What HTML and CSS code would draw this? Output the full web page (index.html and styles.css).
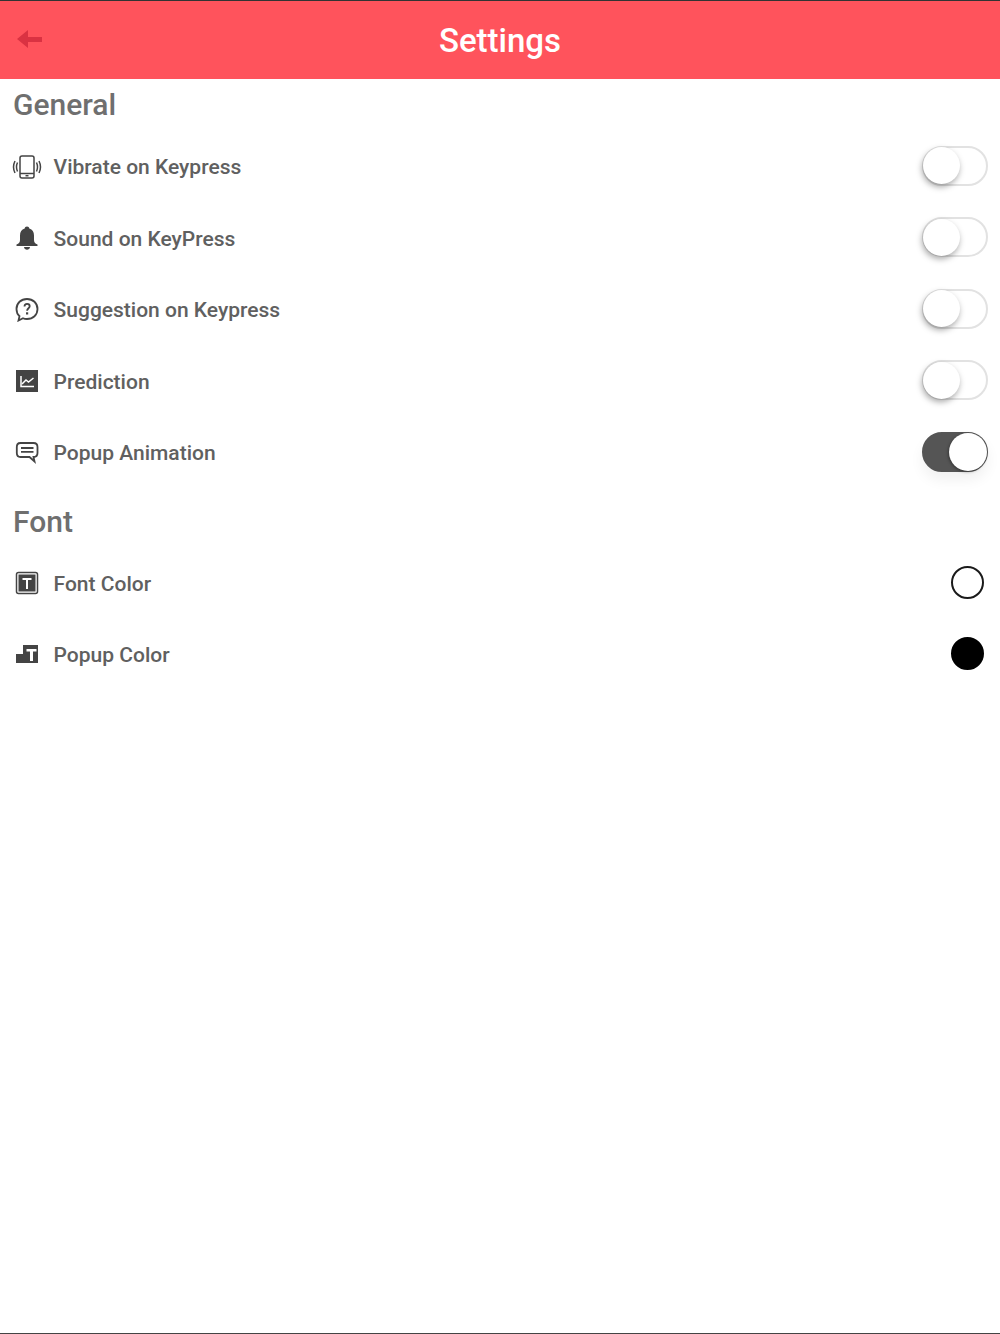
FILE: index.html
```html
<!DOCTYPE html>
<html lang="en">
  <head>
    <meta charset="UTF-8" />
    <meta name="viewport" content="width=device-width, initial-scale=1.0" />
    <title>Settings</title>
    <link rel="stylesheet" href="styles.css">
  </head>
  <body>
    <header class="topbar">
      <svg class="back" viewBox="0 0 26 18" width="26" height="18"><path d="M0 9 11 0V7H25V12H11V18Z" /></svg>
      <h1>Settings</h1>
    </header>

    <main class="settings">
      <h2 class="section-title">General</h2>
      <div class="rows">
        <div class="row">
          <svg class="icon" viewBox="0 0 30 24" width="30" height="24">
            <rect x="8" y="1" width="14" height="22" rx="2" class="line" />
            <path d="M8 18.500H22" class="line" />
            <path d="M13.500 20.700H16.500" class="line" />
            <path d="M5.500 7.500Q3.500 12 5.500 16.500M3 6Q0 12 3 18M24.500 7.500Q26.500 12 24.500 16.500M27 6Q30 12 27 18" class="line" />
          </svg>
          <span class="label">Vibrate on Keypress</span>
          <span class="toggle"><span class="knob"></span></span>
        </div>
        <div class="row">
          <svg class="icon" viewBox="0 0 30 24" width="30" height="24">
            <path d="M15 0.500C16.300 0.500 17.200 1.300 17.300 2.500C20.500 3.500 22 6 22 9.500V14C22 16 23 17.500 25.500 18.500V20H4.500V18.500C7 17.500 8 16 8 14V9.500C8 6 9.500 3.500 12.700 2.500C12.800 1.300 13.700 0.500 15 0.500Z" />
            <path d="M12 21H18C17.800 22.800 16.500 23.800 15 23.800C13.500 23.800 12.200 22.800 12 21Z" />
          </svg>
          <span class="label">Sound on KeyPress</span>
          <span class="toggle"><span class="knob"></span></span>
        </div>
        <div class="row">
          <svg class="icon" viewBox="0 0 30 24" width="30" height="24">
            <path d="M15 1C21 1 25.500 5 25.500 11C25.500 17 21 21 15 21C13.500 21 12 20.700 11 20.200L6.500 22.500L7.500 18.200C5.500 16.500 4.500 14 4.500 11C4.500 5 9 1 15 1Z" class="line thick" />
            <path d="M12.500 8.500C12.500 6.800 13.700 5.800 15.100 5.800C16.600 5.800 17.700 6.800 17.700 8.200C17.700 10.200 15.100 10.300 15.100 12.800" class="line thick" />
            <rect x="14" y="14.300" width="2.200" height="2.200" />
          </svg>
          <span class="label">Suggestion on Keypress</span>
          <span class="toggle"><span class="knob"></span></span>
        </div>
        <div class="row">
          <svg class="icon" viewBox="0 0 30 24" width="30" height="24">
            <rect x="4" y="1" width="22" height="22" />
            <path d="M9 7V17.500H22" class="inverse" />
            <path d="M10 15 14 11 16.500 13 21.500 9" class="inverse" />
          </svg>
          <span class="label">Prediction</span>
          <span class="toggle"><span class="knob"></span></span>
        </div>
        <div class="row">
          <svg class="icon" viewBox="0 0 30 24" width="30" height="24">
            <path d="M8.500 2H21.500C24.500 2 25.500 3.500 25.500 6V12C25.500 14.500 24.500 16 21.500 16L22.500 20.500L17.500 16H8.500C5.500 16 4.800 14.500 4.800 12V6C4.800 3.500 5.500 2 8.500 2Z" class="line thick" />
            <path d="M9 7H21.500M9 10.800H21.500" class="line thick" />
          </svg>
          <span class="label">Popup Animation</span>
          <span class="toggle on"><span class="knob"></span></span>
        </div>
      </div>

      <h2 class="section-title font-title">Font</h2>
      <div class="rows">
        <div class="row">
          <svg class="icon" viewBox="0 0 30 24" width="30" height="24">
            <rect x="4.500" y="1.500" width="21" height="21" rx="2" class="line" />
            <rect x="6.500" y="3.500" width="17" height="17" />
            <path d="M10.500 7H19.500V9H16V18H14V9H10.500Z" class="fill-white" />
          </svg>
          <span class="label">Font Color</span>
          <span class="swatch"></span>
        </div>
        <div class="row">
          <svg class="icon" viewBox="0 0 30 24" width="30" height="24">
            <path d="M11 2H26V20H4V11H11Z" />
            <path d="M14.500 6H24.500V8.500H21V18H18V8.500H14.500Z" class="fill-white" />
          </svg>
          <span class="label">Popup Color</span>
          <span class="swatch filled"></span>
        </div>
      </div>
    </main>
  </body>
</html>
```

FILE: styles.css
```css
* {
  margin: 0;
  padding: 0;
  box-sizing: border-box;
}

html,
body {
  height: 100%;
}

body {
  font-family: "Roboto", sans-serif;
  background-color: #fff;
  border-top: 1px solid #333;
  border-bottom: 1px solid #444;
  overflow: hidden;
}

.topbar {
  height: 78px;
  background-color: #ff535c;
  display: flex;
  align-items: center;
  justify-content: center;
  position: relative;
}

.topbar h1 {
  font-size: 33px;
  font-weight: 500;
  color: #fff;
}

.back {
  position: absolute;
  left: 17px;
  top: 29px;
  fill: #da3242;
}

.settings {
  padding: 0 12px 0 13px;
}

.section-title {
  font-size: 30px;
  font-weight: 500;
  line-height: 34px;
  color: #6f6f6f;
  padding-top: 9px;
}

.font-title {
  padding-top: 16px;
}

.rows {
  display: flex;
  flex-direction: column;
  margin-top: 9px;
}

.row {
  height: 71.5px;
  display: flex;
  align-items: center;
}

.icon {
  fill: #444;
  flex: none;
  margin-left: -1px;
  margin-right: 11.6px;
}

.line {
  fill: none;
  stroke: #444;
  stroke-width: 1.5;
}

.thick {
  stroke-width: 1.8;
}

.inverse {
  fill: none;
  stroke: #fff;
  stroke-width: 1.5;
}

.fill-white {
  fill: #fff;
}

.label {
  flex: 1;
  font-size: 21px;
  line-height: 26px;
  padding-top: 1px;
  font-weight: 500;
  color: #606060;
}

.toggle {
  width: 66px;
  height: 40px;
  border: 2px solid #e2e2e2;
  border-radius: 20px;
  background-color: #fff;
  display: flex;
  align-items: center;
  position: relative;
  top: -1px;
}

.knob {
  width: 37px;
  height: 37px;
  border-radius: 50%;
  background-color: #fff;
  margin-left: -1px;
  box-shadow: -1px 3px 6px rgba(0, 0, 0, 0.35);
}

.toggle.on {
  background-color: #555;
  border-color: #555;
  box-shadow: 0 8px 14px rgba(0, 0, 0, 0.06);
  justify-content: flex-end;
}

.toggle.on .knob {
  width: 38px;
  height: 38px;
  margin-left: 0;
  margin-right: -1px;
  box-shadow: -1px 1px 3px rgba(0, 0, 0, 0.35);
}

.swatch {
  width: 33px;
  height: 33px;
  border-radius: 50%;
  border: 2px solid #1a1a1a;
  background-color: #fff;
  margin-right: 4px;
  position: relative;
  top: -1px;
}

.swatch.filled {
  background-color: #000;
  border-color: #000;
}
```
